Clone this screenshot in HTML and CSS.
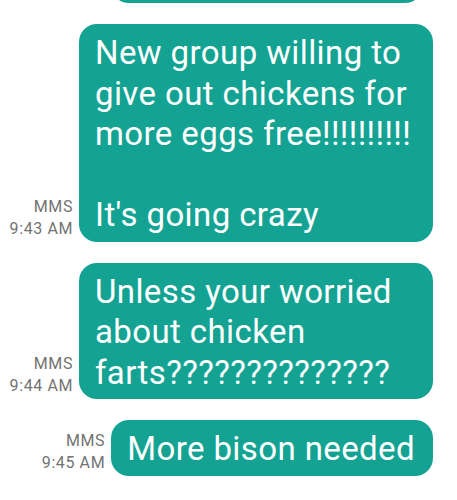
FILE: index.html
```html
<!DOCTYPE html>
<html>
  <head>
    <meta charset="UTF-8" />
    <title>Messages</title>
    <link rel="stylesheet" href="styles.css">
  </head>
  <body>
    <div class="thread">
      <div class="bubble bubble-cut"></div>

      <div class="row">
        <div class="meta">MMS<br />9:43 AM</div>
        <div class="bubble">New group willing to give out chickens for more eggs free!!!!!!!!!!<br /><br />It's going crazy</div>
      </div>

      <div class="row">
        <div class="meta">MMS<br />9:44 AM</div>
        <div class="bubble">Unless your worried about chicken farts??????????????</div>
      </div>

      <div class="row">
        <div class="meta">MMS<br />9:45 AM</div>
        <div class="bubble">More bison needed</div>
      </div>
    </div>
  </body>
</html>
```

FILE: styles.css
```css
* {
  box-sizing: border-box;
}
body {
  margin: 0;
  background: #fff;
  font-family: Roboto, "Noto Sans", sans-serif;
  overflow: hidden;
}
.thread {
  display: flex;
  flex-direction: column;
  align-items: flex-end;
  gap: 21px;
  padding-right: 24px;
}
.row {
  display: flex;
  align-items: flex-end;
  gap: 6px;
}
.meta {
  color: #737373;
  font-size: 16px;
  letter-spacing: 0.6px;
  line-height: 22px;
  text-align: right;
  white-space: nowrap;
  padding-bottom: 2px;
}
.bubble {
  background: #14a393;
  color: #fff;
  font-size: 33px;
  letter-spacing: 0.4px;
  line-height: 40.5px;
  padding: 9px 18px 6px 16px;
  border-radius: 18px;
  max-width: 354px;
}
/* tail end of the previous message, scrolled off the top */
.bubble-cut {
  width: 312px;
  height: 40px;
  margin-top: -37px;
  margin-right: 10px;
}
```
